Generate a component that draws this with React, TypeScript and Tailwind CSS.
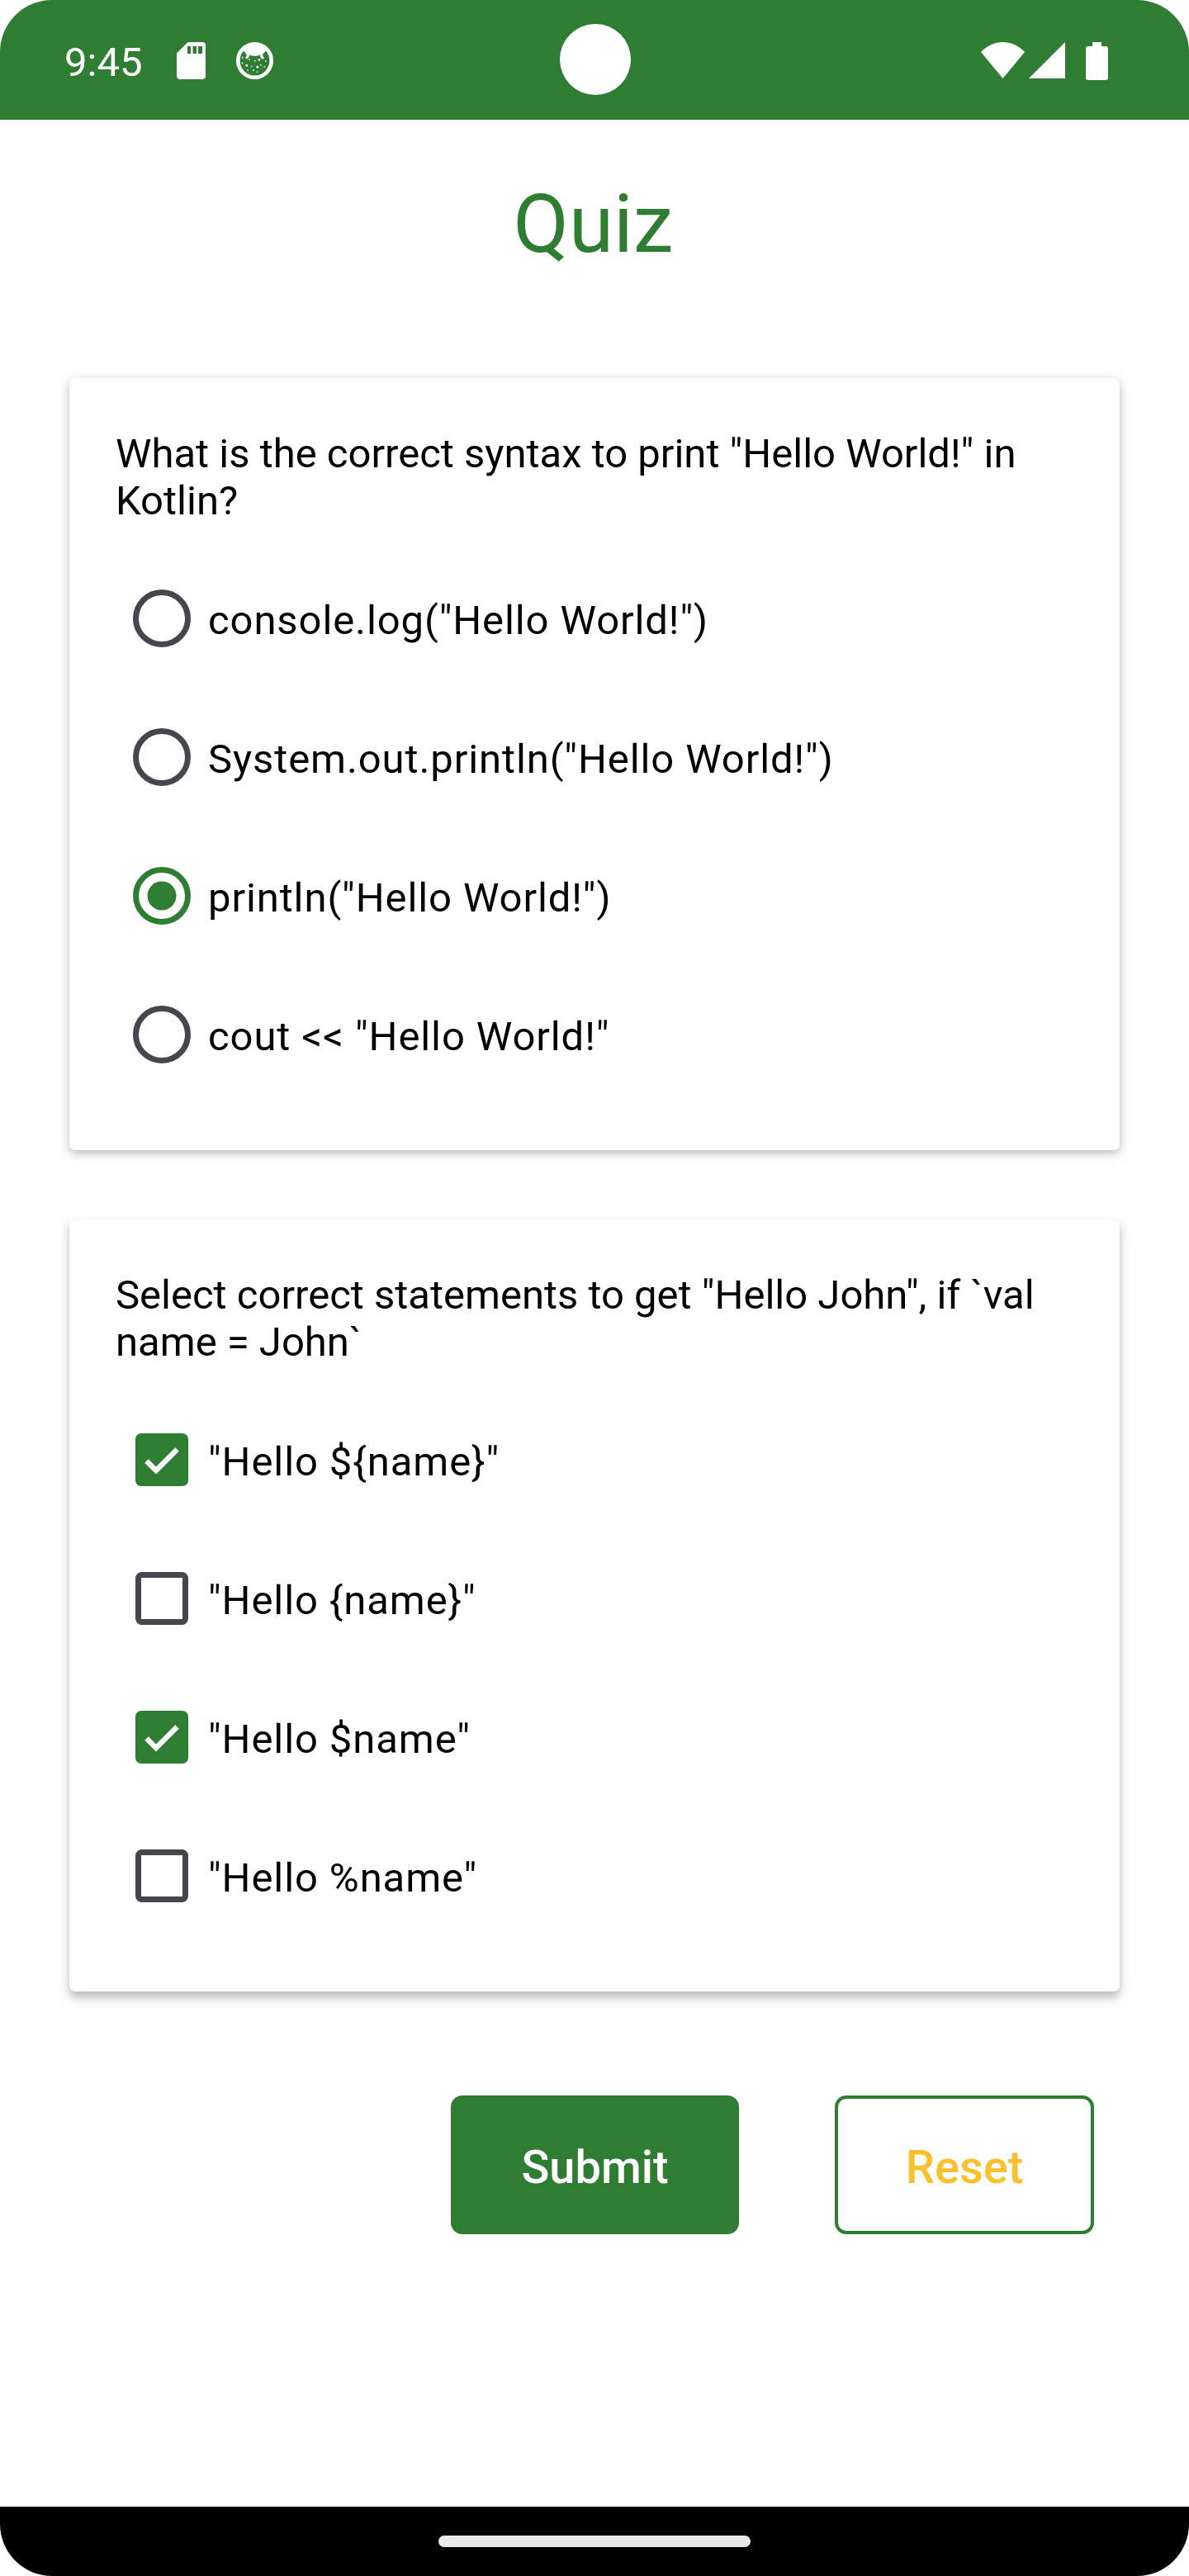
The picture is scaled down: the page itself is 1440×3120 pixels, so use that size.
import { useState } from "react";

function SdCardIcon() {
  return (
    <svg className="h-[45px] w-[35px]" viewBox="0 0 35 45" fill="#fff">
      <path
        fillRule="evenodd"
        d="M13.500 0H31a4 4 0 0 1 4 4v37a4 4 0 0 1-4 4H4a4 4 0 0 1-4-4V13.500zM13 5v9h4V5zM19.500 5v9h4.500V5zM26 5v9h5V5z"
      />
    </svg>
  );
}

function DebugIcon() {
  return (
    <svg className="h-[45px] w-[45px]" viewBox="0 0 45 45" fill="#fff">
      <circle cx="22.500" cy="22.500" r="20.200" fill="none" stroke="#fff" strokeWidth="4.600" />
      <path d="M7 12C12 0 33 0 38 12L36 10.500L32 15L34 20L30.500 20.500L28.500 15.500C25 17.200 20 17.200 16.500 15.500L14 20.500L11 19.500L13 15.500L9 10.500Z" />
      <path d="M11.500 27h2.600v2.600h-2.600zM24.500 28.800h2.600v2.600h-2.600zM26.600 20.200h2.400v2.400h-2.400zM6.800 17.800h1.600v1.600H6.800zM6.800 24.800h1.600v1.600H6.800zM15.500 20.200h1.500v1.500h-1.500zM22 22h1.500v1.500H22zM35 22.200h1.500v1.500H35zM29 27h1.500v1.500H29zM33.500 29h1.500v1.500h-1.500zM17.800 28.800h1.500v1.500h-1.500zM13.300 33.200h1.500v1.500h-1.500zM20 33.200h1.700v1.700H20zM24.700 35.500h1.500V37h-1.500z" />
    </svg>
  );
}

function StatusBar() {
  return (
    <header className="relative flex h-[145px] items-center justify-between bg-[#2e7d32] pt-[2px] pr-[98px] pl-[78px]">
      <div className="flex items-center">
        <span className="w-[136px] pt-1 text-[49px] leading-[58px] text-white">9:45</span>
        <SdCardIcon />
        <span className="w-[37px]" />
        <DebugIcon />
      </div>
      <div className="absolute top-[29px] left-[678px] size-[86px] rounded-full bg-white" />
      <div className="flex items-start">
        <svg className="mr-[5px] h-[44px] w-[53px]" viewBox="0 0 53 44" fill="#fff">
          <path d="M0 12C15-4 38-4 53 12L26.500 44z" />
        </svg>
        <svg className="mr-[25px] h-[44px] w-[44px]" viewBox="0 0 44 44" fill="#fff">
          <path d="M44 0V44H0z" />
        </svg>
        <svg className="h-[46px] w-[27px]" viewBox="0 0 27 46" fill="#fff">
          <path d="M8 0H19V5H24a3 3 0 0 1 3 3V43a3 3 0 0 1-3 3H3a3 3 0 0 1-3-3V8a3 3 0 0 1 3-3H8z" />
        </svg>
      </div>
    </header>
  );
}

function RadioMark({ on }: { on: boolean }) {
  return (
    <svg className="size-[70px]" viewBox="0 0 70 70">
      <circle cx="35" cy="35" r="31.500" fill="none" stroke={on ? "#2e7d32" : "#49454f"} strokeWidth="7" />
      {on && <circle cx="35" cy="35" r="17.500" fill="#2e7d32" />}
    </svg>
  );
}

function CheckMark({ on }: { on: boolean }) {
  return (
    <svg className="size-[64px]" viewBox="0 0 64 64">
      {on ? (
        <>
          <rect width="64" height="64" rx="7" fill="#2e7d32" />
          <path d="M13.500 33.500L25 45L50.500 19.500" fill="none" stroke="#fefefe" strokeWidth="6.500" />
        </>
      ) : (
        <rect x="3.500" y="3.500" width="57" height="57" rx="4" fill="none" stroke="#49454f" strokeWidth="7" />
      )}
    </svg>
  );
}

type OptionProps = { label: string; on: boolean; kind: "radio" | "checkbox"; onToggle: () => void };

function Option({ label, on, kind, onToggle }: OptionProps) {
  return (
    <button type="button" role={kind} aria-checked={on} onClick={onToggle} className="flex h-[168px] items-center text-left">
      <span className="flex w-[112px] justify-center">{kind === "radio" ? <RadioMark on={on} /> : <CheckMark on={on} />}</span>
      <span className="pt-[5px] text-[49px] leading-[58px] tracking-[0.900px] whitespace-pre">{label}</span>
    </button>
  );
}

const cardClass = "flex h-[935px] flex-col rounded-[7px] bg-[#fefefe] px-14 pt-[63px]";

const radios = ['console.log("Hello World!")', 'System.out.println("Hello World!")', 'println("Hello World!")', 'cout << "Hello World!"'];
const checks = ['"Hello ${name}"', '"Hello {name}"', '"Hello $name"', '"Hello %name"'];

export default function App() {
  const [answer, setAnswer] = useState(2);
  const [picked, setPicked] = useState([true, false, true, false]);

  const reset = () => {
    setAnswer(-1);
    setPicked([false, false, false, false]);
  };

  return (
    <div className="h-[3120px] w-[1440px] bg-white">
      <div className="flex h-full flex-col overflow-hidden rounded-[63px] bg-[#fefefe] font-['Roboto',sans-serif] text-black">
        <StatusBar />
        <main className="flex flex-1 flex-col px-[84px]">
          <h1 className="mt-[69px] mb-[129px] pr-[3px] text-center text-[98px] leading-[115px] text-[#2e7d32]">Quiz</h1>
          <section className={cardClass + " mb-[84px] shadow-[0_4px_12px_rgba(0,0,0,0.26)]"}>
            <p className="mb-[30px] text-[49px] leading-[57px] whitespace-pre">{'What is the correct syntax to print "Hello World!" in\nKotlin?'}</p>
            {radios.map((label, i) => (
              <Option key={label} kind="radio" label={label} on={answer === i} onToggle={() => setAnswer(i)} />
            ))}
          </section>
          <section className={cardClass + " shadow-[0_7px_12px_rgba(0,0,0,0.27)]"}>
            <p className="mb-[30px] text-[49px] leading-[57px] whitespace-pre">{'Select correct statements to get "Hello John", if `val\nname = John`'}</p>
            {checks.map((label, i) => (
              <Option
                key={label}
                kind="checkbox"
                label={label}
                on={picked[i]}
                onToggle={() => setPicked(picked.map((value, j) => (j === i ? !value : value)))}
              />
            ))}
          </section>
          <div className="mt-[126px] mr-[31px] flex justify-end gap-[116px]">
            <button type="button" className="h-[168px] w-[349px] rounded-[14px] bg-[#2e7d32] pt-1.5 text-[56px] font-medium text-white">
              Submit
            </button>
            <button type="button" onClick={reset} className="h-[168px] w-[314px] rounded-[14px] border-4 border-[#2e7d32] pt-1.5 text-[56px] font-medium text-[#fbc02d]">
              Reset
            </button>
          </div>
        </main>
        <footer className="flex h-[84px] items-center justify-center bg-black">
          <div className="h-[14px] w-[378px] rounded-full bg-[#eaeaea]" />
        </footer>
      </div>
    </div>
  );
}
